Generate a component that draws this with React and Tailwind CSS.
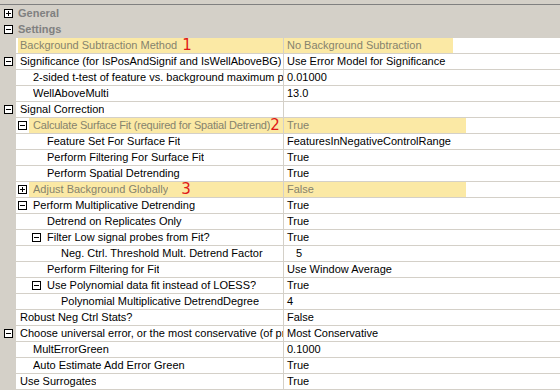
import React from "react";

// level: A text at x18, B at x33, C at x47, D at x61
const indentCls = { A: "w-0", B: "w-[13px]", C: "w-[27px]", D: "w-[41px]" };
const padCls = { A: "pl-[2px]", B: "pl-[4px]", C: "pl-[4px]", D: "pl-[4px]" };

const rows = [
  { label: "Background Subtraction Method", value: "No Background Subtraction", lv: "A", hl: { num: "1", numCls: "ml-[5px]", vw: "w-[169px]" } },
  { label: "Significance (for IsPosAndSignif and IsWellAboveBG)", value: "Use Error Model for Significance", lv: "A", gbox: "minus" },
  { label: "2-sided t-test of feature vs. background maximum p-value", value: "0.01000", lv: "B" },
  { label: "WellAboveMulti", value: "13.0", lv: "B" },
  { label: "Signal Correction", value: "", lv: "A", gbox: "minus" },
  { label: "Calculate Surface Fit (required for Spatial Detrend)", value: "True", lv: "B", box: "minus", lcls: "tracking-[-0.2px]", hl: { num: "2", numCls: "ml-0", vw: "w-[182px]" } },
  { label: "Feature Set For Surface Fit", value: "FeaturesInNegativeControlRange", lv: "C" },
  { label: "Perform Filtering For Surface Fit", value: "True", lv: "C" },
  { label: "Perform Spatial Detrending", value: "True", lv: "C" },
  { label: "Adjust Background Globally", value: "False", lv: "B", box: "plus", hl: { num: "3", numCls: "ml-[13px]", vw: "w-[182px]" } },
  { label: "Perform Multiplicative Detrending", value: "True", lv: "B", box: "minus" },
  { label: "Detrend on Replicates Only", value: "True", lv: "C" },
  { label: "Filter Low signal probes from Fit?", value: "True", lv: "C", box: "minus" },
  { label: "Neg. Ctrl. Threshold Mult. Detrend Factor", value: "5", lv: "D", vpad: "pl-[12px]" },
  { label: "Perform Filtering for Fit", value: "Use Window Average", lv: "C" },
  { label: "Use Polynomial data fit instead of LOESS?", value: "True", lv: "C", box: "minus" },
  { label: "Polynomial Multiplicative DetrendDegree", value: "4", lv: "D" },
  { label: "Robust Neg Ctrl Stats?", value: "False", lv: "A" },
  { label: "Choose universal error, or the most conservative (of propagated and universal)", value: "Most Conservative", lv: "A", gbox: "minus" },
  { label: "MultErrorGreen", value: "0.1000", lv: "B" },
  { label: "Auto Estimate Add Error Green", value: "True", lv: "B" },
  { label: "Use Surrogates", value: "True", lv: "A" },
];

function Box({ type }) {
  return (
    <div className="w-[9px] h-[9px] shrink-0 border border-black bg-white flex items-center justify-center">
      <div className="w-[5px] h-[5px] flex flex-col items-center justify-center relative">
        <div className="w-[5px] h-px bg-black" />
        {type === "plus" && <div className="absolute w-px h-[5px] bg-black" />}
      </div>
    </div>
  );
}

function Category({ label, open }) {
  return (
    <div className="h-[16px] flex items-start bg-[#d4d0c8]">
      <div className="w-[16px] shrink-0 flex pl-[4px] pt-[3px]">
        <Box type={open ? "minus" : "plus"} />
      </div>
      <span className="pl-[2px] font-bold text-[#808080] leading-[15px]">{label}</span>
    </div>
  );
}

const HL_TEXT = "text-[#86836d]";

export default function App() {
  return (
    <div
      className="w-[560px] h-[391px] bg-white overflow-hidden text-[11px] text-black flex flex-col"
      style={{ fontFamily: '"Liberation Sans", Tahoma, sans-serif' }}
    >
      <div className="h-[4px] shrink-0 bg-[#d4d0c8]" />
      <div className="h-px shrink-0 bg-[#808080]" />
      <div className="h-px shrink-0 bg-[#d4d0c8]" />
      <Category label="General" open={false} />
      <Category label="Settings" open={true} />
      {rows.map((r, i) => (
        <div key={i} className="flex h-[16px] shrink-0">
          <div className="w-[16px] shrink-0 bg-[#d4d0c8] flex items-start pl-[4px] pt-[3px]">
            {r.gbox && <Box type={r.gbox} />}
          </div>
          <div className="w-[267px] shrink-0 flex border-b border-[#d4d0c8] overflow-hidden">
            <div className={`${indentCls[r.lv]} shrink-0 flex justify-end items-start pt-[3px] pr-[2px]`}>
              {r.box && <Box type={r.box} />}
            </div>
            <div className={`flex-1 min-w-0 flex items-start ${padCls[r.lv]} ${r.hl ? "bg-[#fbe9a5] " + HL_TEXT : ""}`}>
              <span className={`leading-[15px] whitespace-nowrap overflow-hidden ${r.lcls || ""} ${r.hl ? "min-w-0" : ""}`}>{r.label}</span>
              {r.hl && (
                <span
                  className={`${r.hl.numCls} shrink-0 leading-[15px] text-[15px] text-[#e01818]`}
                  style={{ fontFamily: '"DejaVu Sans", sans-serif' }}
                >
                  {r.hl.num}
                </span>
              )}
            </div>
          </div>
          <div className="w-px shrink-0 bg-[#d4d0c8]" />
          <div className="flex-1 flex border-b border-[#d4d0c8]">
            <div className={`${r.hl ? r.hl.vw + " bg-[#fbe9a5] " + HL_TEXT : ""} ${r.vpad || "pl-[3px]"} leading-[15px] whitespace-nowrap`}>
              {r.value}
            </div>
          </div>
        </div>
      ))}
    </div>
  );
}
